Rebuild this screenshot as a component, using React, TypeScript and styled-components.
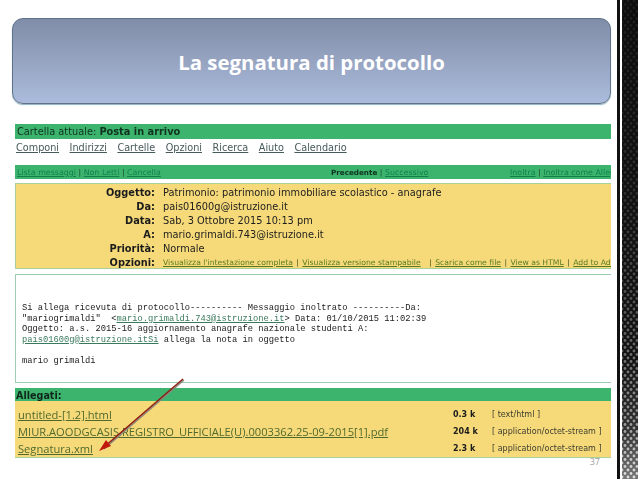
import { Fragment } from "react";
import styled, { createGlobalStyle } from "styled-components";

const GlobalStyle = createGlobalStyle`
  html, body { margin: 0; padding: 0; background: #fff; }
  body { width: 638px; height: 479px; overflow: hidden; }
`;

const Slide = styled.div`
  position: relative;
  display: flex;
  width: 638px;
  height: 479px;
  overflow: hidden;
`;

const Content = styled.div`
  flex: 0 0 617px;
  box-sizing: border-box;
  padding: 18px 6px 0 12px;
  display: flex;
  flex-direction: column;
`;

const TitleBox = styled.div`
  height: 86px;
  box-sizing: border-box;
  display: flex;
  align-items: center;
  justify-content: center;
  padding-top: 2px;
  border: 1px solid #5f7289;
  border-radius: 11px;
  background: linear-gradient(#808da8, #abbbdb);
  box-shadow: 0 1px 1px #8fb2bd;
  color: #fff;
  font: 700 20.4px "Open Sans", "Lato", sans-serif;
`;

// Tutto il blocco del messaggio, leggermente sfocato come la cattura originale
const Mail = styled.div`
  margin: 20px 0 0 3px;
  width: 596px;
  overflow: hidden;
  filter: blur(0.45px);
  font-family: "DejaVu Sans", sans-serif;
  color: #1c1c1c;
`;

const FolderBar = styled.div`
  height: 15px;
  background: #3cb46e;
  padding-left: 2px;
  font-size: 9.8px;
  line-height: 15px;
  color: #10321f;
  b { font-weight: 700; }
`;

const Menu = styled.nav`
  display: flex;
  gap: 10.5px;
  height: 26px;
  padding: 1px 0 0 1px;
  box-sizing: border-box;
  font-size: 9.7px;
  line-height: 16px;
`;

const MenuLink = styled.a`
  color: #47595a;
  text-decoration: underline;
`;

const ActionBar = styled.div`
  display: flex;
  height: 14px;
  background: #3cb46e;
  font-size: 7.9px;
  line-height: 15px;
  white-space: nowrap;
  color: #184a2c;
  b { font-size: 7.2px; font-weight: 700; color: #10321f; }
`;

const ActionGroup = styled.div<{ $width: number; $inset?: number }>`
  flex: 0 0 ${(p) => p.$width}px;
  padding-left: ${(p) => p.$inset ?? 0}px;
  box-sizing: border-box;
  overflow: hidden;
`;

const ActionLink = styled.a`
  color: #11804c;
  text-decoration: underline;
`;

const Headers = styled.div`
  margin-top: 4px;
  height: 86px;
  box-sizing: border-box;
  padding-top: 2px;
  background: #f6da7a;
  border: 1px solid #a9cf9a;
  border-right: 0;
  display: grid;
  grid-template-columns: 139px 1fr;
  column-gap: 8px;
  grid-auto-rows: 14px;
  font-size: 9.8px;
  line-height: 14px;
  white-space: nowrap;
`;

const HeaderLabel = styled.div`
  text-align: right;
  font-weight: 700;
`;

const HeaderValue = styled.div`
  overflow: hidden;
`;

const OptionLinks = styled.div`
  overflow: hidden;
  font-size: 7.7px;
  color: #3f4f20;
`;

const OptionLink = styled.a`
  color: #5a7a22;
  text-decoration: underline;
`;

const OptionSep = styled.span<{ $before?: number }>`
  margin: 0 1px 0 ${(p) => p.$before ?? 1}px;
`;

const Body = styled.div`
  margin-top: 5px;
  height: 109px;
  box-sizing: border-box;
  border: 1px solid #9fcdb0;
  border-right: 0;
  padding: 28px 0 0 6px;
  font: 8.75px/10.5px "Liberation Mono", monospace;
  color: #222;
  white-space: pre;
`;

const BodyLink = styled.a`
  color: #3a7a5c;
  text-decoration: underline;
`;

const AttachTitle = styled.div`
  margin-top: 5px;
  height: 13px;
  background: #3cb46e;
  padding-left: 1px;
  font-size: 9.6px;
  font-weight: 700;
  line-height: 15px;
  color: #10241a;
`;

const AttachList = styled.div`
  height: 57px;
  box-sizing: border-box;
  padding-top: 5px;
  background: #f6da7a;
  border-bottom: 1px solid #a9cf9a;
`;

const AttachRow = styled.div`
  display: grid;
  grid-template-columns: 435px 39px 1fr;
  height: 17px;
  padding-left: 3px;
  align-items: center;
  white-space: nowrap;
`;

const AttachName = styled.a`
  font: 11.15px "Open Sans", sans-serif;
  color: #50692c;
  text-decoration: underline;
`;

const AttachSize = styled.div`
  font-size: 8px;
  font-weight: 700;
`;

const AttachType = styled.div`
  font-size: 8px;
  color: #3c3c30;
`;

const PageNumber = styled.div`
  align-self: flex-end;
  margin: -3px 11px 0 0;
  font: 9px "Open Sans", sans-serif;
  color: #a0a0a0;
`;

const ArrowLayer = styled.svg`
  position: absolute;
  left: 90px;
  top: 370px;
`;

const Rule = styled.div`
  flex: 0 0 3px;
  background: #111;
`;

const Gap = styled.div`
  flex: 0 0 2px;
  background: #fff;
`;

const Strip = styled.svg`
  flex: 0 0 16px;
  display: block;
`;

const STOPS: [number, number][] = [
  [0, 30],
  [200, 50],
  [330, 95],
  [420, 150],
  [479, 225],
];

const dotShade = (y: number) => {
  for (let i = 1; i < STOPS.length; i++) {
    if (y <= STOPS[i][0]) {
      const [y0, v0] = STOPS[i - 1];
      const [y1, v1] = STOPS[i];
      const v = Math.round(v0 + ((y - y0) / (y1 - y0)) * (v1 - v0));
      return `rgb(${v},${v},${v})`;
    }
  }
  return "rgb(225,225,225)";
};

const dots: { x: number; y: number }[] = [];
for (let row = 0; row < 138; row++) {
  for (let col = 0; col < 4; col++) {
    dots.push({ x: col * 6 + (row % 2 ? 3 : 0), y: row * 3.5 + 1 });
  }
}

const menu = ["Componi", "Indirizzi", "Cartelle", "Opzioni", "Ricerca", "Aiuto", "Calendario"];

const headers = [
  ["Oggetto:", "Patrimonio: patrimonio immobiliare scolastico - anagrafe"],
  ["Da:", "pais01600g@istruzione.it"],
  ["Data:", "Sab, 3 Ottobre 2015 10:13 pm"],
  ["A:", "mario.grimaldi.743@istruzione.it"],
  ["Priorità:", "Normale"],
];

const attachments = [
  ["untitled-[1.2].html", "0.3 k", "[ text/html ]"],
  ["MIUR.AOODGCASIS.REGISTRO_UFFICIALE(U).0003362.25-09-2015[1].pdf", "204 k", "[ application/octet-stream ]"],
  ["Segnatura.xml", "2.3 k", "[ application/octet-stream ]"],
];

export default function App() {
  return (
    <Slide>
      <GlobalStyle />
      <Content>
        <TitleBox>La segnatura di protocollo</TitleBox>
        <Mail>
          <FolderBar>
            Cartella attuale: <b>Posta in arrivo</b>
          </FolderBar>
          <Menu>
            {menu.map((m) => (
              <MenuLink key={m}>{m}</MenuLink>
            ))}
          </Menu>
          <ActionBar>
            <ActionGroup $width={316} $inset={2}>
              <ActionLink>Lista messaggi</ActionLink> | <ActionLink>Non Letti</ActionLink> | <ActionLink>Cancella</ActionLink>
            </ActionGroup>
            <ActionGroup $width={179}>
              <b>Precedente</b> | <ActionLink>Successivo</ActionLink>
            </ActionGroup>
            <ActionGroup $width={101}>
              <ActionLink>Inoltra</ActionLink> | <ActionLink>Inoltra come Allegato</ActionLink>
            </ActionGroup>
          </ActionBar>
          <Headers>
            {headers.map(([label, value]) => (
              <Fragment key={label}>
                <HeaderLabel>{label}</HeaderLabel>
                <HeaderValue>{value}</HeaderValue>
              </Fragment>
            ))}
            <HeaderLabel>Opzioni:</HeaderLabel>
            <OptionLinks>
              <OptionLink>Visualizza l'intestazione completa</OptionLink> <OptionSep>|</OptionSep> <OptionLink>Visualizza versione stampabile</OptionLink>{" "}
              <OptionSep $before={6}>|</OptionSep> <OptionLink>Scarica come file</OptionLink> <OptionSep>|</OptionSep> <OptionLink>View as HTML</OptionLink>{" "}
              <OptionSep>|</OptionSep> <OptionLink>Add to Address Book</OptionLink>
            </OptionLinks>
          </Headers>
          <Body>
            {"Si allega ricevuta di protocollo---------- Messaggio inoltrato ----------Da:\n"}
            {'"mariogrimaldi"  <'}
            <BodyLink>mario.grimaldi.743@istruzione.it</BodyLink>
            {"> Data: 01/10/2015 11:02:39\n"}
            {"Oggetto: a.s. 2015-16 aggiornamento anagrafe nazionale studenti A:\n"}
            <BodyLink>pais01600g@istruzione.itSi</BodyLink>
            {" allega la nota in oggetto\n\nmario grimaldi"}
          </Body>
          <AttachTitle>Allegati:</AttachTitle>
          <AttachList>
            {attachments.map(([name, size, type]) => (
              <AttachRow key={name}>
                <AttachName>{name}</AttachName>
                <AttachSize>{size}</AttachSize>
                <AttachType>{type}</AttachType>
              </AttachRow>
            ))}
          </AttachList>
        </Mail>
        <PageNumber>37</PageNumber>
      </Content>
      <Rule />
      <Gap />
      <Strip width="16" height="479" viewBox="0 0 16 479">
        <defs>
          <linearGradient id="stripBg" x1="0" y1="0" x2="0" y2="1">
            <stop offset="0" stopColor="#0e0e0e" />
            <stop offset="0.75" stopColor="#141414" />
            <stop offset="0.9" stopColor="#333" />
            <stop offset="1" stopColor="#777" />
          </linearGradient>
        </defs>
        <rect width="16" height="479" fill="url(#stripBg)" />
        {dots.map((d) => (
          <circle key={`${d.x}-${d.y}`} cx={d.x} cy={d.y} r={1.4} fill={dotShade(d.y)} />
        ))}
      </Strip>
      <ArrowLayer width="100" height="90" viewBox="0 0 100 90">
        <path d="M94 10 L14 79" stroke="#8a8a80" strokeWidth="1.4" fill="none" />
        <path d="M93 9 L13 78" stroke="#8f1c12" strokeWidth="1.6" fill="none" />
        <path d="M9 81 L21 76 L16 70 Z" fill="#c2170c" />
      </ArrowLayer>
    </Slide>
  );
}
